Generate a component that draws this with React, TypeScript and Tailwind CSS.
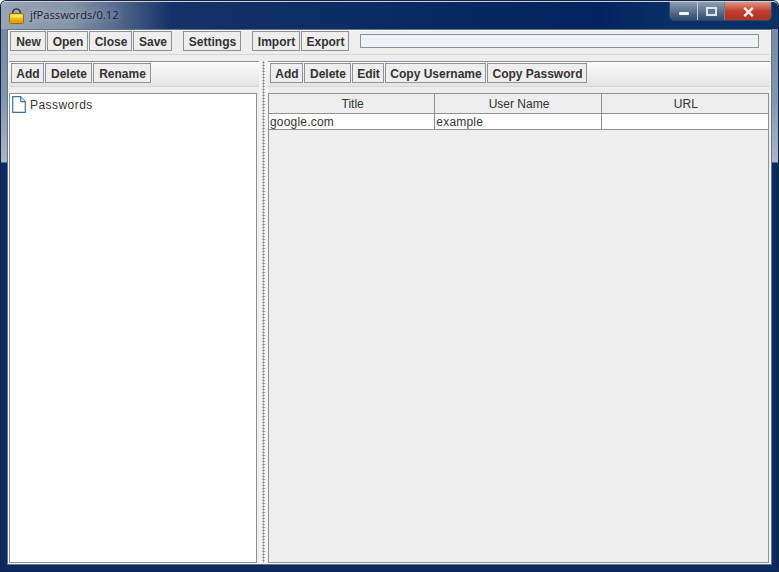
const sans = "font-['Liberation_Sans',Arial,sans-serif]";

function Btn({ label, width }: { label: string; width: number }) {
  return (
    <button
      style={{ width }}
      className="block h-5 shrink-0 border border-[#8e9296] bg-[#eeeeee] pt-[1px] pl-[1px] text-center text-[12px] leading-[18px] font-bold text-[#333333]"
    >
      {label}
    </button>
  );
}

function Lock() {
  return (
    <svg width="15" height="16" viewBox="0 0 15 16" className="shrink-0">
      <path d="M3.8 6.5V4.4a3.7 3.4 0 0 1 7.4 0v2.1" fill="none" stroke="#3d4146" strokeWidth="1.7" />
      <path d="M5.6 6V4.5a1.9 1.8 0 0 1 3.8 0V6" fill="none" stroke="#c4c8cc" strokeWidth="0.7" />
      <rect x="0.5" y="5.5" width="14" height="10" rx="1.2" fill="#f0b90f" stroke="#8f6c12" />
      <rect x="1.5" y="6.5" width="12" height="3" fill="#fde66d" />
      <rect x="1.5" y="12.5" width="12" height="2" fill="#dd9c08" />
    </svg>
  );
}

function PageIcon() {
  return (
    <svg width="14" height="17" viewBox="0 0 14 17" className="shrink-0">
      <path d="M0.7 0.7h8l4.6 5v10.6H0.7z" fill="#ffffff" stroke="#3f719f" strokeWidth="1.2" />
      <path d="M8.7 0.7v5h4.6" fill="#dbe9f5" stroke="#3f719f" strokeWidth="1.2" />
    </svg>
  );
}

function WindowControls() {
  const glass = "bg-gradient-to-b from-[#8d9fb6] via-[#5f748f] to-[#2c4a72]";
  return (
    <div className="flex h-[19px] w-[103px] shrink-0 overflow-hidden rounded-b-[5px] border border-t-0 border-[#34465f]">
      <div className={`flex w-[28px] items-start justify-center border-r border-[#c3ccd8] pt-[10px] ${glass}`}>
        <div className="h-[3px] w-[10px] bg-[#f2f4f6]" />
      </div>
      <div className={`flex w-[27px] items-start justify-center border-r border-[#6b7f97] pt-[5px] ${glass}`}>
        <div className="h-[9px] w-[11px] border-2 border-[#dfe4ea] bg-[#62768f]" />
      </div>
      <div className="flex flex-1 items-start justify-center bg-gradient-to-b from-[#d99485] via-[#c43c2c] to-[#a93425] pt-[5px]">
        <svg width="11" height="10" viewBox="0 0 11 10">
          <path d="M1.2 0.8l8.6 8.4M9.8 0.8l-8.6 8.4" stroke="#eeeeee" strokeWidth="2.4" />
        </svg>
      </div>
    </div>
  );
}

export default function App() {
  return (
    <div className="h-[572px] w-[779px] overflow-hidden rounded-t-[6px] bg-[#16243f] p-[1px]">
      <div className="flex h-full flex-col rounded-t-[5px] bg-[linear-gradient(180deg,#6f84a0_0px,#8298b2_100px,#a9b8c8_161px,#0a2a63_162px)] px-[6px] pb-[6px]">
        <div className="-mx-[6px] flex h-[28px] shrink-0 items-start justify-between rounded-t-[5px] border-t border-[#c9d2dd] bg-[linear-gradient(90deg,#98a5b4_0px,#8494a8_70px,#54698c_115px,#143268_170px,#032360_600px,#0a3068_670px)] pr-[6px]">
          <div className="flex h-[27px] items-center gap-[6px] pl-[8px] font-['Open_Sans',sans-serif] text-[11.2px] text-[#15202e] [text-shadow:0_0_6px_#c9d2dd]">
            <Lock />
            <span>jfPasswords/0.12</span>
          </div>
          <WindowControls />
        </div>

        <div className="min-h-0 flex-1 border border-[#66727f]">
          <div className={`flex h-full flex-col border border-[#f7f8f9] bg-[#eeeeee] ${sans}`}>
            <div className="mb-[6px] flex h-[24px] shrink-0 items-start border-b border-[#d6d6d6] pl-[1px]">
              <div className="flex gap-[1px]">
                <Btn label="New" width={36} />
                <Btn label="Open" width={41} />
                <Btn label="Close" width={43} />
                <Btn label="Save" width={39} />
              </div>
              <div className="ml-[11px]">
                <Btn label="Settings" width={58} />
              </div>
              <div className="ml-[11px] flex gap-[1px]">
                <Btn label="Import" width={48} />
                <Btn label="Export" width={48} />
              </div>
              <div className="mt-[3px] ml-[11px] h-[14px] w-[399px] border border-[#8e9296] bg-[#eef1f5]" />
            </div>

            <div className="flex min-h-0 flex-1">
              <div className="flex w-[250px] shrink-0 flex-col">
                <div className="mb-[6px] flex h-[26px] shrink-0 gap-[1px] border-t border-b border-t-[#8e9296] border-b-[#d6d6d6] bg-gradient-to-b from-[#fbfbfb] to-[#e4e4e4] pt-[1px] pl-[2px]">
                  <Btn label="Add" width={33} />
                  <Btn label="Delete" width={47} />
                  <Btn label="Rename" width={58} />
                </div>
                <div className="mr-[2px] flex flex-1 items-start gap-[4px] border border-[#8e9296] bg-white pt-[2px] pl-[2px] text-[12px] tracking-[0.45px] text-[#333333]">
                  <PageIcon />
                  <span>Passwords</span>
                </div>
              </div>

              <div className="flex w-[9px] shrink-0 justify-center bg-[#f4f4f4]">
                <div className="h-full w-[3px] bg-[radial-gradient(circle,#8a8a8a_0.9px,transparent_1.2px)] bg-[length:3px_3px]" />
              </div>

              <div className="flex min-w-0 flex-1 flex-col">
                <div className="mb-[6px] flex h-[26px] shrink-0 gap-[1px] border-t border-b border-t-[#8e9296] border-b-[#d6d6d6] bg-gradient-to-b from-[#fbfbfb] to-[#e4e4e4] pt-[1px] pl-[2px]">
                  <Btn label="Add" width={33} />
                  <Btn label="Delete" width={47} />
                  <Btn label="Edit" width={32} />
                  <Btn label="Copy Username" width={101} />
                  <Btn label="Copy Password" width={100} />
                </div>
                <div className="mr-[1px] min-h-0 flex-1 border border-[#8e9296] bg-[#eeeeee] text-[12px] text-[#333333]">
                  <div className="grid h-[20px] grid-cols-3 border-b border-[#8e9296]">
                    {["Title", "User Name", "URL"].map((title) => (
                      <div key={title} className="border-r border-[#8e9296] pt-[1px] pl-[2px] text-center leading-[19px] last:border-r-0">
                        {title}
                      </div>
                    ))}
                  </div>
                  <div className="grid h-[16px] grid-cols-3 border-b border-[#8e9296] bg-white tracking-[0.2px]">
                    {["google.com", "example", ""].map((cell, i) => (
                      <div key={i} className="border-r border-[#8e9296] pt-[1px] pl-[1px] leading-[14px] last:border-r-0">
                        {cell}
                      </div>
                    ))}
                  </div>
                </div>
              </div>
            </div>
          </div>
        </div>
      </div>
    </div>
  );
}
